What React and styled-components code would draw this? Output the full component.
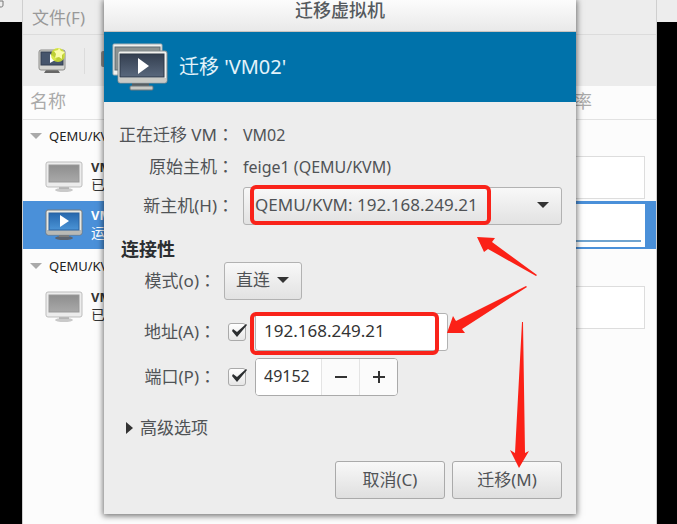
import React, { useState } from "react";
import styled, { createGlobalStyle } from "styled-components";

const GlobalStyle = createGlobalStyle`
	*{
		box-sizing:border-box;
	}
	body{
		margin:0;
		overflow:hidden;
		background-color:#000;
		color:#505356;
		font-family:"Noto Sans", "Noto Sans CJK SC", sans-serif;
		font-size:16px;
		line-height:24px;
	}
	button, input, select{
		margin:0;
		font-family:inherit;
		color:inherit;
	}
	svg{
		display:block;
	}
`;

/* desktop + manager window */
const Desktop = styled.div`
	min-height:100vh;
	padding:0 21px 0 23px;
	display:flex;
	background:linear-gradient(#ededed 22px, #000 22px);
	position:relative;
`;
const Corner = styled.svg`
	position:absolute;
	top:0;
	left:0;
`;
const Manager = styled.div`
	flex:1;
	min-width:0;
	background-color:#fcfcfc;
	box-shadow:0 0 0 1px #cfcfcf;
	position:relative;
`;
const MenuBar = styled.nav`
	height:35px;
	padding:6px 9px;
	background-color:#ededed;
	border-bottom:1px solid #dcdcdc;
	button{
		padding:0;
		border:0;
		background-color:transparent;
		color:#999;
		font-size:17px;
		line-height:24px;
	}
`;
const Toolbar = styled.div`
	height:51px;
	padding:0 15px;
	display:flex;
	align-items:center;
	gap:16px;
	background-color:#ececec;
	button{
		padding:0;
		border:0;
		background-color:transparent;
	}
`;
const Separator = styled.div`
	width:1px;
	height:26px;
	background-color:#dcdcdc;
`;
const VmTable = styled.table`
	width:100%;
	border-collapse:collapse;
	table-layout:fixed;
	td, th{
		padding:0;
	}
	th{
		height:33px;
		padding:0 7px 3px;
		border-bottom:1px solid #e2e2e2;
		color:#aaa;
		font-size:18px;
		font-weight:400;
		text-align:left;
		&:last-child{
			width:152px;
			padding-right:64px;
			text-align:right;
			white-space:nowrap;
		}
	}
`;
const GroupCell = styled.td`
	height:34px;
	color:#222;
	font-size:13px;
	div{
		padding-left:7px;
		display:flex;
		align-items:center;
		gap:7px;
	}
`;
const VmRow = styled.tr`
	height:48px;
	background-color:${({ $on }) => ($on ? "#4a90d9" : "transparent")};
	color:${({ $on }) => ($on ? "#fff" : "#333")};
	font-size:14px;
	line-height:18px;
`;
const VmName = styled.div`
	padding:0 0 2px 22px;
	display:flex;
	align-items:center;
	gap:8px;
	strong{
		display:block;
		font-size:13px;
	}
`;
const Usage = styled.div`
	height:43px;
	margin-right:11px;
	padding:0 3px 4px;
	display:flex;
	align-items:flex-end;
	background-color:#fff;
	border:1px solid ${({ $on }) => ($on ? "#fff" : "#ddd")};
	&::after{
		content:"";
		width:100%;
		height:${({ $on }) => ($on ? "2px" : "0")};
		background-color:#6fa3cf;
	}
`;

/* dialog */
const Dialog = styled.form`
	background-color:#ededed;
	box-shadow:0 1px 6px 1px rgba(0, 0, 0, 0.55);
	position:absolute;
	top:0;
	left:81px;
	right:80px;
`;
const TitleBar = styled.h1`
	height:32px;
	margin:0;
	background:linear-gradient(#fcfcfc, #e9e9e9);
	border-bottom:1px solid #c9c4bf;
	color:#555a5e;
	font-size:18px;
	font-weight:500;
	line-height:20px;
	text-align:center;
`;
const Banner = styled.div`
	height:70px;
	padding:0 8px;
	display:flex;
	align-items:center;
	gap:11px;
	background-color:#0072aa;
	color:#e3f3fa;
	h2{
		margin:0;
		font-size:20px;
		font-weight:400;
	}
`;
const Body = styled.div`
	padding:17px 14px 15px;
	h3{
		margin:11px 3px 0;
		color:#2b2e30;
		font-size:18px;
		font-weight:700;
		line-height:26px;
	}
`;
const Row = styled.div`
	min-height:32px;
	margin-top:${({ $top }) => $top || 0}px;
	display:grid;
	grid-template-columns:${({ $narrow }) => ($narrow ? 98 : 116)}px minmax(0, 1fr);
	column-gap:${({ $narrow }) => ($narrow ? 8 : 9)}px;
	align-items:center;
`;
const Label = styled.label`
	padding-bottom:1px;
	font-size:17px;
	text-align:right;
	white-space:nowrap;
`;
const Colon = styled.span`
	font-family:"Noto Sans CJK TC", sans-serif;
`;
const Controls = styled.div`
	display:flex;
	align-items:center;
	gap:9px;
`;
const SelectWrap = styled.div`
	width:${({ $width }) => $width || "100%"};
	position:relative;
	select{
		width:100%;
		height:38px;
		padding:0 11px 4px;
		appearance:none;
		background:linear-gradient(#f8f8f8, #e2e2e2);
		border:1px solid #b2b2b2;
		border-radius:3px;
		font-size:17px;
	}
	svg{
		pointer-events:none;
		position:absolute;
		top:15px;
		right:13px;
	}
`;
const Check = styled.input`
	width:18px;
	height:18px;
	margin-left:4px;
	appearance:none;
	background:linear-gradient(#fff, #e6e6e6);
	border:1px solid #aaa;
	border-radius:3px;
`;
const CheckWrap = styled.span`
	display:flex;
	position:relative;
	svg{
		pointer-events:none;
		position:absolute;
		top:0;
		left:5px;
	}
`;
const Entry = styled.input`
	width:193px;
	height:38px;
	padding:0 8px 3px;
	background-color:#fff;
	border:1px solid #b2b2b2;
	border-radius:3px;
	color:#333;
	font-size:17px;
`;
const Spin = styled.div`
	height:38px;
	display:flex;
	background-color:#fff;
	border:1px solid #aaa;
	border-radius:4px;
	overflow:hidden;
	input{
		width:65px;
		padding:0 8px 3px;
		border:0;
		color:#333;
		font-size:16px;
	}
	button{
		width:38px;
		padding:0;
		display:grid;
		place-items:center;
		background-color:#fbfbfb;
		border:0;
		border-left:1px solid #e4e4e4;
	}
`;
const Expander = styled.button`
	margin-top:20px;
	padding:0 8px;
	display:flex;
	align-items:center;
	gap:7px;
	background-color:transparent;
	border:0;
	font-size:17px;
	line-height:24px;
`;
const Actions = styled.div`
	margin-top:21px;
	display:flex;
	justify-content:flex-end;
	gap:7px;
`;
const Button = styled.button`
	width:110px;
	height:38px;
	padding:0 0 3px;
	background:linear-gradient(#f8f8f8, #dfdfdf);
	border:1px solid #aaa;
	border-radius:3px;
	font-size:17px;
`;
const Marks = styled.svg`
	pointer-events:none;
	position:absolute;
	top:0;
	left:0;
`;

const Down = ({ color = "#333" }) => (
	<svg width="12" height="6" viewBox="0 0 12 6">
		<path d="M0 0h12L6 6z" fill={color} />
	</svg>
);

const Monitor = ({ on }) => (
	<svg width="38" height="31" viewBox="0 0 38 31">
		<defs>
			<linearGradient id={on ? "scrOn" : "scrOff"} x1="0" y1="0" x2="0" y2="1">
				<stop offset="0" stopColor={on ? "#2667ad" : "#8e8e8e"} />
				<stop offset="1" stopColor={on ? "#4b94d6" : "#a9a9a9"} />
			</linearGradient>
		</defs>
		<ellipse cx="19" cy="29" rx="9" ry="2" fill={on ? "#5b6470" : "#c9c9c9"} />
		<path d="M14 25h10v3H14z" fill={on ? "#7c7c7c" : "#b5b5b5"} />
		<rect x="1" y="1" width="36" height="25" rx="2" fill={on ? "#e8e8e2" : "#ececec"} stroke={on ? "#737a80" : "#bdbdbd"} />
		{on && <path d="M2 21h34v4H2z" fill="#b9bab6" />}
		<rect x="4" y="4" width="30" height="17" fill={`url(#${on ? "scrOn" : "scrOff"})`} stroke={on ? "#2b62a0" : "#999"} />
		{on && <path d="M15 6v12l9-6z" fill="#fff" />}
	</svg>
);

const NewVmIcon = () => (
	<svg width="30" height="28" viewBox="0 0 30 28">
		<path d="M8 23h12l2 3H6z" fill="#666" />
		<rect x="1" y="3" width="26" height="20" rx="2" fill="#d6d6d2" stroke="#8c8c8a" />
		<rect x="3" y="5" width="22" height="13" fill="#46556c" stroke="#333f50" />
		<path d="M12 7v9l7-4z" fill="#fff" />
		<circle cx="20" cy="8" r="7" fill="#d3e52b" opacity="0.85" />
		<path d="M21 1l2 3 4 1-3 3v4l-3-2-4 1 1-4-2-3 4-1z" fill="#fbfdaa" />
	</svg>
);

const MigrateIcon = () => (
	<svg width="56" height="48" viewBox="0 0 56 48">
		<defs>
			<linearGradient id="scrMig" x1="0" y1="0" x2="0" y2="1">
				<stop offset="0" stopColor="#343f50" />
				<stop offset="1" stopColor="#59687d" />
			</linearGradient>
		</defs>
		<rect x="1" y="1" width="49" height="31" rx="1" fill="#f1f1ee" stroke="#a8b0b3" />
		<rect x="3" y="4" width="45" height="23" fill="#8d9392" stroke="#606d72" />
		<path d="M20 40h17v4H20z" fill="#555d62" />
		<rect x="18" y="43" width="23" height="4" rx="1" fill="#c8c9c5" stroke="#6c777c" />
		<rect x="6" y="8" width="49" height="32" rx="2" fill="#f2f2ef" stroke="#838b8e" />
		<path d="M7 35h47v4H7z" fill="#c9cac6" />
		<rect x="8" y="11" width="44" height="23" fill="url(#scrMig)" stroke="#2c3848" />
		<path d="M26 15v16l11-8z" fill="#fff" />
	</svg>
);

const Tick = () => (
	<svg width="19" height="17" viewBox="0 0 19 17">
		<path d="M4 6l4 3 9-8 1 1-10 12-5-6z" fill="#2b2e30" />
	</svg>
);

const groups = [
	{ host: "QEMU/KVM", vms: [{ name: "VM01", state: "已关闭" }, { name: "VM02", state: "运行中", on: true }] },
	{ host: "QEMU/KVM", vms: [{ name: "VM01", state: "已关闭" }] },
];

const VmList = () => (
	<VmTable>
		<thead>
			<tr>
				<th>名称</th>
				<th>使用率</th>
			</tr>
		</thead>
		{groups.map((group, idx) => (
			<tbody key={idx}>
				<tr>
					<GroupCell colSpan={2}>
						<div><Down color="#aaa" />{group.host}</div>
					</GroupCell>
				</tr>
				{group.vms.map((vm) => (
					<VmRow key={vm.name} $on={vm.on}>
						<td>
							<VmName>
								<Monitor on={vm.on} />
								<div><strong>{vm.name}</strong>{vm.state}</div>
							</VmName>
						</td>
						<td><Usage $on={vm.on} /></td>
					</VmRow>
				))}
			</tbody>
		))}
	</VmTable>
);

const Checkbox = ({ label }) => {
	const [checked, setChecked] = useState(true);
	return (
		<CheckWrap>
			<Check type="checkbox" aria-label={label} checked={checked} onChange={() => setChecked(!checked)} />
			{checked && <Tick />}
		</CheckWrap>
	);
};

const MigrateDialog = () => {
	const [address, setAddress] = useState("192.168.249.21");
	const [port, setPort] = useState(49152);

	return (
		<Dialog onSubmit={(e) => e.preventDefault()}>
			<TitleBar>迁移虚拟机</TitleBar>
			<Banner>
				<MigrateIcon />
				<h2>迁移 'VM02'</h2>
			</Banner>
			<Body>
				<Row>
					<Label as="span">正在迁移 VM<Colon>：</Colon></Label>
					<span>VM02</span>
				</Row>
				<Row>
					<Label as="span">原始主机<Colon>：</Colon></Label>
					<span>feige1 (QEMU/KVM)</span>
				</Row>
				<Row $top={4}>
					<Label htmlFor="host">新主机(H)<Colon>：</Colon></Label>
					<SelectWrap>
						<select id="host">
							<option>QEMU/KVM: 192.168.249.21</option>
						</select>
						<Down />
					</SelectWrap>
				</Row>

				<h3>连接性</h3>
				<Row $narrow>
					<Label htmlFor="mode">模式(o)<Colon>：</Colon></Label>
					<SelectWrap $width="78px">
						<select id="mode">
							<option>直连</option>
						</select>
						<Down />
					</SelectWrap>
				</Row>
				<Row $narrow $top={13}>
					<Label htmlFor="address">地址(A)<Colon>：</Colon></Label>
					<Controls>
						<Checkbox label="地址" />
						<Entry id="address" value={address} onChange={(e) => setAddress(e.target.value)} />
					</Controls>
				</Row>
				<Row $narrow $top={7}>
					<Label htmlFor="port">端口(P)<Colon>：</Colon></Label>
					<Controls>
						<Checkbox label="端口" />
						<Spin>
							<input id="port" value={port} onChange={(e) => setPort(Number(e.target.value) || 0)} />
							<button type="button" aria-label="减" onClick={() => setPort(port - 1)}>
								<svg width="12" height="12"><path d="M0 5h12v2H0z" fill="#333" /></svg>
							</button>
							<button type="button" aria-label="加" onClick={() => setPort(port + 1)}>
								<svg width="12" height="12"><path d="M0 5h5V0h2v5h5v2H7v5H5V7H0z" fill="#333" /></svg>
							</button>
						</Spin>
					</Controls>
				</Row>

				<Expander type="button" aria-expanded="false">
					<svg width="7" height="12"><path d="M0 0l7 6-7 6z" fill="#333" /></svg>
					高级选项
				</Expander>

				<Actions>
					<Button type="button">取消(C)</Button>
					<Button type="submit">迁移(M)</Button>
				</Actions>
			</Body>
			{/* red frames and arrows drawn over the fields */}
			<Marks width="472" height="514" viewBox="104 0 472 514">
				<g fill="none" stroke="#f9231a" strokeWidth="4">
					<rect x="252" y="187" width="237" height="36" rx="4" />
					<rect x="252" y="314" width="185" height="39" rx="4" />
				</g>
				<g fill="#fb2117">
					<path d="M477 237l18 1-3 4 45 33-1 1-48-27-4 3z" />
					<path d="M447 333l6-17 3 5 70-35 1 1-65 42 3 4z" />
					<path d="M519 468l-9-18 5 3 7-131h1l2 131 4-2z" />
				</g>
			</Marks>
		</Dialog>
	);
};

const App = () => (
	<>
		<GlobalStyle />
		<Desktop>
			<Corner width="6" height="9">
				<path d="M0 1h3v4c0 2-1 2-3 2" fill="none" stroke="#777" strokeWidth="1" />
			</Corner>
			<Manager>
				<MenuBar><button type="button">文件(F)</button></MenuBar>
				<Toolbar>
					<button type="button" aria-label="新建虚拟机"><NewVmIcon /></button>
					<Separator />
					<button type="button" aria-label="打开">
						<svg width="24" height="20"><rect width="24" height="16" rx="2" fill="#8c8c8c" /></svg>
					</button>
				</Toolbar>
				<VmList />
				<MigrateDialog />
			</Manager>
		</Desktop>
	</>
);

export default App;
